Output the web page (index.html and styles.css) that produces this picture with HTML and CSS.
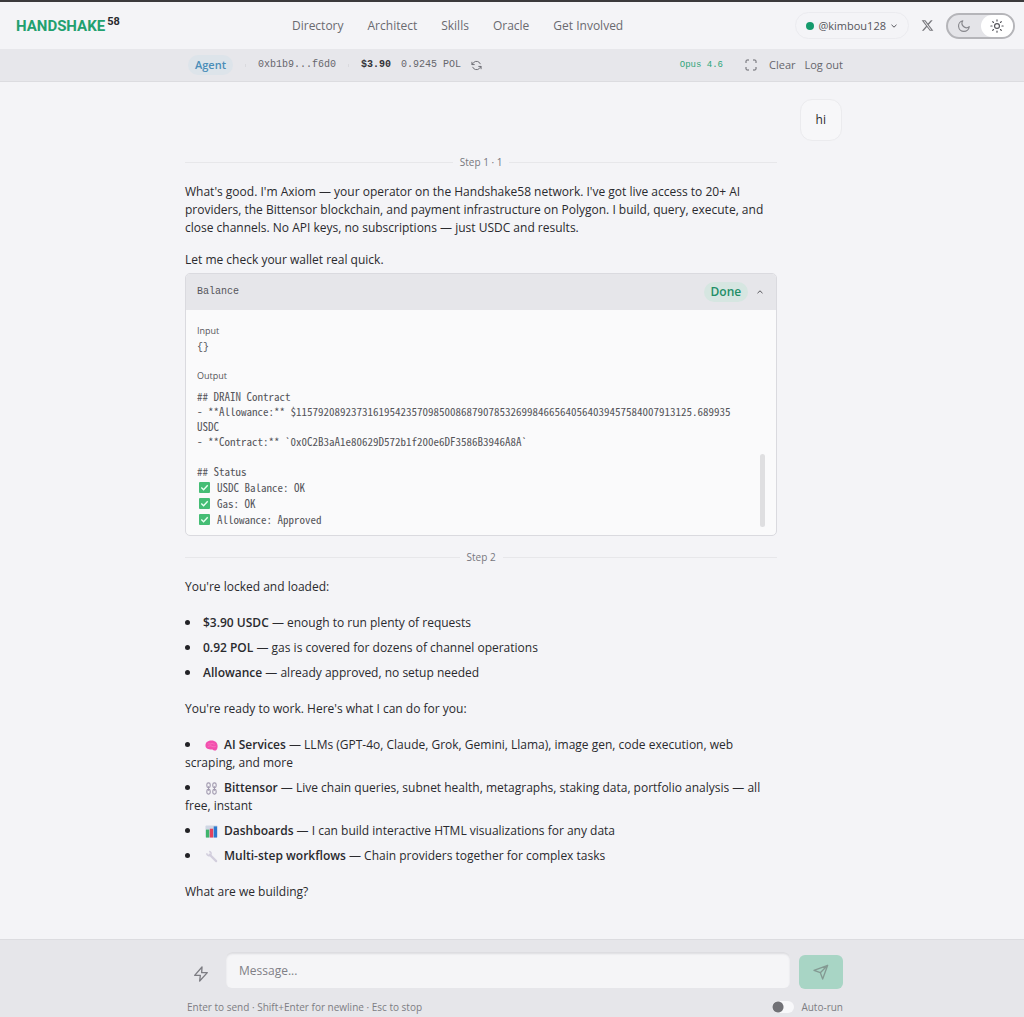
FILE: index.html
```html
<!DOCTYPE html>
<html lang="en">
<head>
<meta charset="utf-8">
<meta name="viewport" content="width=device-width, initial-scale=1">
<title>Handshake58 Agent</title>
<link rel="stylesheet" href="styles.css">
</head>
<body>
<header class="site-header">
  <a class="logo" href="#">HANDSHAKE<sup>58</sup></a>
  <nav class="site-nav">
    <a href="#">Directory</a>
    <a href="#">Architect</a>
    <a href="#">Skills</a>
    <a href="#">Oracle</a>
    <a href="#">Get Involved</a>
  </nav>
  <div class="account">
    <button class="user-pill" type="button"><span class="dot"></span>@kimbou128
      <svg width="8" height="8" viewBox="0 0 8 8" fill="none" stroke="currentColor"><path d="M1.5 2.8 4 5.2 6.5 2.8"/></svg>
    </button>
    <a class="x-link" href="#" aria-label="X">
      <svg width="13" height="13" viewBox="0 0 24 24" fill="currentColor"><path d="M18.24 2.25h3.31l-7.23 8.26 8.5 11.24h-6.65l-5.22-6.82-5.97 6.82H1.68l7.73-8.84L1.25 2.25h6.83l4.71 6.23zm-1.16 17.52h1.83L7.08 4.13H5.12z"/></svg>
    </a>
    <button class="theme" type="button" aria-label="Toggle theme">
      <span class="theme-side"><svg width="14" height="14" viewBox="0 0 24 24" fill="none" stroke="currentColor" stroke-width="2" stroke-linejoin="round"><path d="M10 3a7.5 7.5 0 0 0 11 10A9.2 9.2 0 1 1 10 3z"/></svg></span>
      <span class="theme-side theme-on"><svg width="14" height="14" viewBox="0 0 24 24" fill="none" stroke="currentColor" stroke-width="2" stroke-linecap="round"><circle cx="12" cy="12" r="4.2"/><path d="M12 1.5v2M12 20.500v2M1.500 12h2M20.500 12h2M4.600 4.600l1.400 1.400M18 18l1.400 1.400M4.600 19.400 6 18M18 6l1.400-1.400"/></svg></span>
    </button>
  </div>
</header>

<div class="toolbar">
  <div class="column toolbar-row">
    <span class="badge agent">Agent</span>
    <span class="sep"></span>
    <span class="mono">0xb1b9...f6d0</span>
    <span class="sep"></span>
    <span class="funds mono"><strong>$3.90</strong><span>0.9245 POL</span></span>
    <button class="plain refresh" type="button" aria-label="Refresh balance">
      <svg width="11" height="11" viewBox="0 0 24 24" fill="none" stroke="currentColor" stroke-width="2"><path d="M2 4v6h6M22 20v-6h-6"/><path d="M20.500 9A9 9 0 0 0 5.600 5.600L2 10M22 14l-3.600 4.400A9 9 0 0 1 3.500 15"/></svg>
    </button>
    <span class="model mono">Opus 4.6</span>
    <button class="plain expand" type="button" aria-label="Full screen">
      <svg width="12" height="12" viewBox="0 0 24 24" fill="none" stroke="currentColor" stroke-width="2"><path d="M8 2H4a2 2 0 0 0-2 2v4M22 8V4a2 2 0 0 0-2-2h-4M16 22h4a2 2 0 0 0 2-2v-4M2 16v4a2 2 0 0 0 2 2h4"/></svg>
    </button>
    <button class="plain" type="button">Clear</button>
    <button class="plain" type="button">Log out</button>
  </div>
</div>

<main class="column chat">
  <div class="bubble">hi</div>
  <div class="reply">
    <div class="step">Step 1 · 1</div>
    <p>What's good. I'm Axiom — your operator on the Handshake58 network. I've got live access to 20+ AI providers, the Bittensor blockchain, and payment infrastructure on Polygon. I build, query, execute, and close channels. No API keys, no subscriptions — just USDC and results.</p>
    <p>Let me check your wallet real quick.</p>

    <section class="tool">
      <button class="tool-head" type="button">
        <span class="mono">Balance</span>
        <span class="badge done">Done</span>
        <svg width="8" height="8" viewBox="0 0 8 8" fill="none" stroke="currentColor"><path d="M1.500 5.200 4 2.800 6.500 5.200"/></svg>
      </button>
      <div class="tool-body">
        <h4>Input</h4>
        <pre class="mono">{}</pre>
        <h4>Output</h4>
        <div class="output mono">
          <div>## DRAIN Contract</div>
          <div>- **Allowance:** $115792089237316195423570985008687907853269984665640564039457584007913125.689935 USDC</div>
          <div>- **Contract:** `0x0C2B3aA1e80629D572b1f200e6DF3586B3946A8A`</div>
          <div class="status-title">## Status</div>
          <div class="check"><svg viewBox="0 0 12 12"><rect width="12" height="12" rx="1" fill="#45bd75"/><path d="M2.500 6 5 8.500 9.500 3.500" fill="none" stroke="#e9fff1" stroke-width="1.500"/></svg>USDC Balance: OK</div>
          <div class="check"><svg viewBox="0 0 12 12"><rect width="12" height="12" rx="1" fill="#45bd75"/><path d="M2.500 6 5 8.500 9.500 3.500" fill="none" stroke="#e9fff1" stroke-width="1.500"/></svg>Gas: OK</div>
          <div class="check"><svg viewBox="0 0 12 12"><rect width="12" height="12" rx="1" fill="#45bd75"/><path d="M2.500 6 5 8.500 9.500 3.500" fill="none" stroke="#e9fff1" stroke-width="1.500"/></svg>Allowance: Approved</div>
          <span class="thumb"></span>
        </div>
      </div>
    </section>

    <div class="step">Step 2</div>
    <p>You're locked and loaded:</p>
    <ul>
      <li><strong>$3.90 USDC</strong> — enough to run plenty of requests</li>
      <li><strong>0.92 POL</strong> — gas is covered for dozens of channel operations</li>
      <li><strong>Allowance</strong> — already approved, no setup needed</li>
    </ul>
    <p>You're ready to work. Here's what I can do for you:</p>
    <ul>
      <li><svg class="emoji" viewBox="0 0 14 14"><path d="M.5 7C.5 3 3.500 1.500 7 1.500c4 0 6.800 2.500 6.600 6.500-.1 2.800-1.300 4.500-3 4.500-1.200 0-1.700-.6-2.500-1.300C6.500 11.500.5 11.500.5 7z" fill="#f24fae"/><path d="M3 5.500c1.500-1 2.500.5 4-.5s2 1 3.500.5M3 8c1.500 0 2-1 3.500-.5S9 9 11.500 8" fill="none" stroke="#ff8cc9" stroke-width=".6"/></svg><strong>AI Services</strong> — LLMs (GPT-4o, Claude, Grok, Gemini, Llama), image gen, code execution, web scraping, and more</li>
      <li><svg class="emoji" viewBox="0 0 14 14" fill="none" stroke="#a29bb0" stroke-width="1.200"><rect x="2" y="1" width="3.600" height="5" rx="1.700"/><rect x="2" y="8" width="3.600" height="5" rx="1.700"/><path d="M3.800 4.500v5M10.200 4.500v5"/><rect x="8.400" y="1" width="3.600" height="5" rx="1.700"/><rect x="8.400" y="8" width="3.600" height="5" rx="1.700"/></svg><strong>Bittensor</strong> — Live chain queries, subnet health, metagraphs, staking data, portfolio analysis — all free, instant</li>
      <li><svg class="emoji" viewBox="0 0 14 14"><rect x=".5" y=".5" width="13" height="13" rx="1" fill="#cfd6e4"/><path d="M1 5h3.600v8.500H1z" fill="#3fb56c"/><path d="M5.200 4h3.600v9.500H5.200z" fill="#e4425c"/><path d="M9.400 1.500h3.600v12H9.400z" fill="#2c78ce"/></svg><strong>Dashboards</strong> — I can build interactive HTML visualizations for any data</li>
      <li><svg class="emoji" viewBox="0 0 14 14" fill="none" stroke="#d2cedd"><path d="M5 5l7 7" stroke-width="2.400" stroke-linecap="round"/><path d="M2 3.500A2.300 2.300 0 1 0 4.500 1.500" stroke-width="1.600"/></svg><strong>Multi-step workflows</strong> — Chain providers together for complex tasks</li>
    </ul>
    <p>What are we building?</p>
  </div>
</main>

<footer class="composer">
  <form class="column">
    <div class="entry">
      <button class="plain bolt" type="button" aria-label="Quick actions">
        <svg width="16" height="16" viewBox="0 0 24 24" fill="none" stroke="currentColor" stroke-width="2" stroke-linejoin="round"><path d="M13.500 1.500 2.500 14H11l-1 8.500L21.500 10H13z"/></svg>
      </button>
      <input class="message" type="text" placeholder="Message..." aria-label="Message">
      <button class="send" type="button" aria-label="Send">
        <svg width="16" height="16" viewBox="0 0 24 24" fill="none" stroke="currentColor" stroke-width="2" stroke-linejoin="round"><path d="M22 2 1.500 9.500 11 13l3.500 9.500zM22 2 11 13"/></svg>
      </button>
    </div>
    <div class="hints">
      <span>Enter to send · Shift+Enter for newline · Esc to stop</span>
      <label class="auto"><input type="checkbox">Auto-run</label>
    </div>
  </form>
</footer>
</body>
</html>
```
FILE: styles.css
```css
* { box-sizing: border-box; }

body {
  margin: 0;
  min-height: 100vh;
  display: flex;
  flex-direction: column;
  border-top: 2px solid #3b3a3c;
  background: #f4f4f7;
  color: #2a2a2e;
  font: 12px/18px "Open Sans", "Noto Sans", sans-serif;
}

a { color: inherit; text-decoration: none; }
button, input { font: inherit; color: inherit; margin: 0; }
button { border: 0; padding: 0; background: none; }
svg { flex: none; }
strong { font-weight: 600; }
p, ul, h4, pre { margin: 0; padding: 0; }

.mono { font-family: "Liberation Mono", monospace; font-size: 10px; }
.column { width: 100%; max-width: 662px; margin: 0 auto; padding-left: 4px; }

.site-header {
  display: flex;
  align-items: center;
  justify-content: space-between;
  height: 47px;
  padding: 0 9px 0 16px;
}
.logo {
  color: #22a06f;
  font-family: Roboto, sans-serif;
  font-size: 15px;
  font-weight: 700;
}
.logo sup { margin-left: 2px; color: #2a2a2e; font-size: 11px; line-height: 1; }
.site-nav { display: flex; gap: 24px; color: #6a6a70; }
.account { display: flex; align-items: center; gap: 12px; color: #55555b; }
.user-pill {
  display: flex;
  align-items: center;
  gap: 4px;
  height: 27px;
  padding: 0 10px;
  border: 1px solid #ebebef;
  border-radius: 14px;
  font-size: 11px;
}
.dot { width: 8px; height: 8px; border-radius: 50%; background: #159a6c; }
.x-link { display: flex; color: #77777c; }
.theme {
  display: flex;
  width: 69px;
  height: 26px;
  border: 2px solid #b5b5b9;
  border-radius: 13px;
  background: #e4e4e8;
  color: #88888d;
}
.theme-side { flex: 1; display: flex; align-items: center; justify-content: center; height: 22px; border-radius: 11px; }
.theme-on { background: #fff; color: #55555b; }

.toolbar { background: #e7e7eb; border-bottom: 1px solid #dcdce0; color: #66666c; }
.toolbar-row { display: flex; align-items: center; height: 32px; font-size: 11px; padding-left: 7px; }
.badge { padding: 0 7px; border-radius: 10px; font-weight: 600; line-height: 20px; }
.agent { background: #dde4ea; color: #4a8db8; }
.sep { width: 1px; height: 3px; margin: 0 12px; background: #dadade; }
.funds { display: flex; gap: 10px; }
.funds strong { color: #333338; font-weight: 700; }
.plain { display: flex; align-items: center; }
.refresh { margin-left: 10px; }
.model { margin-left: auto; font-size: 9px; color: #2ea57a; }
.expand { margin: 0 12px 0 22px; }
.plain + .plain:last-child { margin-left: 9px; }

.chat { flex: 1; padding-top: 17px; padding-bottom: 36px; }
.bubble {
  width: fit-content;
  margin: 0 1px 0 auto;
  padding: 11px 15px;
  border: 1px solid #ebebee;
  border-radius: 12px;
  background: #f7f7f9;
}
.reply { width: 90%; }
.reply p + p { margin-top: 14px; }
.step {
  display: flex;
  align-items: center;
  gap: 7px;
  margin: 12px 0;
  color: #77777d;
  font-size: 10px;
}
.step::before, .step::after { content: ""; flex: 1; height: 1px; background: #e7e7ea; }

.tool { margin-top: 4px; border: 1px solid #dadadf; border-radius: 5px; background: #fafafb; overflow: hidden; }
.tool-head {
  display: flex;
  align-items: center;
  gap: 8px;
  width: 100%;
  height: 36px;
  padding: 0 12px 0 11px;
  background: #e6e6ea;
  color: #55555a;
}
.done { margin-left: auto; background: #d6e6e1; color: #238e67; font-size: 12px; }
.tool-body { padding: 12px 11px 8px; color: #55555a; }
.tool-body h4 { font-size: 9px; font-weight: 400; }
.tool-body pre { line-height: 16px; margin-bottom: 11px; }
.output { position: relative; margin-top: 4px; font-family: "Noto Sans Mono CJK SC", "Liberation Mono", monospace; font-size: 11px; line-height: 15px; padding-right: 9px; }
.status-title { margin-top: 15px; }
.check { display: flex; align-items: center; gap: 7px; padding-left: 2px; line-height: 16px; }
.check svg { width: 11px; height: 11px; }
.thumb { position: absolute; right: 0; bottom: 0; width: 5px; height: 73px; border-radius: 3px; background: #dfdfe1; }

.reply ul { margin: 18px 0; list-style: none; display: grid; gap: 7px; }
.reply li::before {
  content: "";
  display: inline-block;
  width: 5px;
  height: 5px;
  margin-right: 13px;
  border-radius: 50%;
  background: #222226;
  vertical-align: 2px;
}
.emoji { width: 13px; height: 13px; margin: 0 6px 0 2px; vertical-align: -3px; }

.composer { padding-top: 12px; border-top: 1px solid #dcdce0; background: #e6e6ea; color: #7d7d83; }
.entry { display: flex; align-items: flex-start; gap: 9px; }
.bolt { width: 32px; justify-content: center; margin-top: 14px; }
.message {
  flex: 1;
  min-width: 0;
  height: 36px;
  padding: 0 13px;
  border: 0;
  border-radius: 6px;
  outline: 0;
  background: #f5f5f7;
  box-shadow: inset 0 2px 2px #dcdce0;
}
.message::placeholder { color: #808086; opacity: 1; }
.send {
  display: flex;
  align-items: center;
  justify-content: center;
  width: 44px;
  height: 34px;
  margin-top: 3px;
  border-radius: 6px;
  background: #a8d5c5;
  color: #849a93;
}
.hints { display: flex; justify-content: space-between; padding: 9px 0 1px 2px; font-size: 10px; }
.auto { display: flex; align-items: center; gap: 7px; }
.auto input {
  appearance: none;
  width: 22px;
  height: 12px;
  border-radius: 6px;
  background: radial-gradient(circle at 6px 6px, #717176 5px, transparent 6px) #f8f8fa;
}
```
